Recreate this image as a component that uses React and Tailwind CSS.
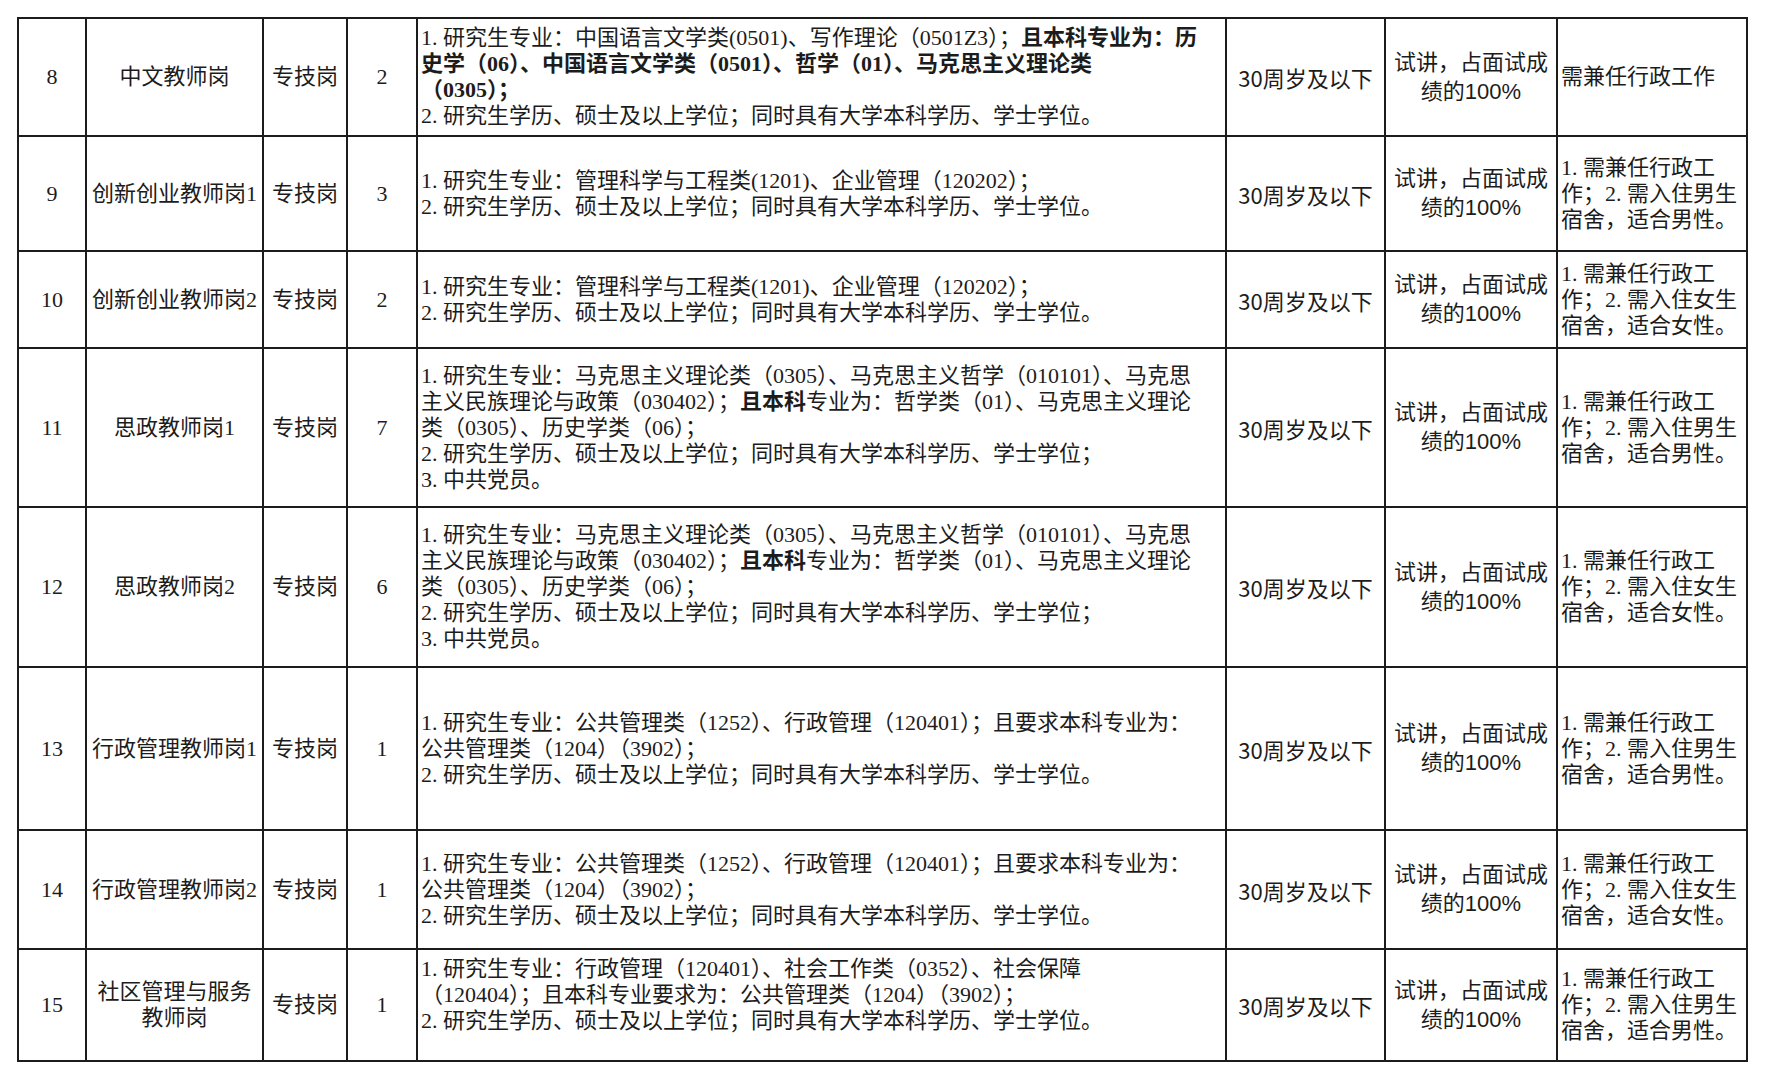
const SERIF = "font-[Liberation_Serif,Noto_Sans_CJK_SC,serif]";

const cols = [68, 177, 84, 70, 809, 159, 172, 190];

const edu2 = "2.研究生学历、硕士及以上学位；同时具有大学本科学历、学士学位。";

const reqA = [
  ["1.研究生专业：管理科学与工程类(1201)、企业管理（120202）；"],
  [edu2],
];

const reqMarx = [
  ["1.研究生专业：马克思主义理论类（0305）、马克思主义哲学（010101）、马克思"],
  ["主义民族理论与政策（030402）；", { b: "且本科" }, "专业为：哲学类（01）、马克思主义理论"],
  ["类（0305）、历史学类（06）；"],
  ["2.研究生学历、硕士及以上学位；同时具有大学本科学历、学士学位；"],
  ["3.中共党员。"],
];

const reqAdmin = [
  ["1.研究生专业：公共管理类（1252）、行政管理（120401）；且要求本科专业为："],
  ["公共管理类（1204）（3902）；"],
  [edu2],
];

const note = (sex) => [
  "1.需兼任行政工",
  `作；2.需入住${sex}生`,
  `宿舍，适合${sex}性。`,
];

const rows = [
  {
    no: "8",
    name: ["中文教师岗"],
    count: "2",
    h: 118,
    req: [
      ["1.研究生专业：中国语言文学类(0501)、写作理论（0501Z3）；", { b: "且本科专业为：历" }],
      [{ b: "史学（06）、中国语言文学类（0501）、哲学（01）、马克思主义理论类" }],
      [{ b: "（0305）；" }],
      [edu2],
    ],
    note: ["需兼任行政工作"],
  },
  { no: "9", name: ["创新创业教师岗1"], count: "3", h: 115, req: reqA, note: note("男") },
  { no: "10", name: ["创新创业教师岗2"], count: "2", h: 97, req: reqA, note: note("女") },
  { no: "11", name: ["思政教师岗1"], count: "7", h: 159, req: reqMarx, note: note("男") },
  { no: "12", name: ["思政教师岗2"], count: "6", h: 160, req: reqMarx, note: note("女") },
  { no: "13", name: ["行政管理教师岗1"], count: "1", h: 163, req: reqAdmin, note: note("男") },
  { no: "14", name: ["行政管理教师岗2"], count: "1", h: 119, req: reqAdmin, note: note("女") },
  {
    no: "15",
    name: ["社区管理与服务", "教师岗"],
    count: "1",
    h: 112,
    top: true,
    req: [
      ["1.研究生专业：行政管理（120401）、社会工作类（0352）、社会保障"],
      ["（120404）；且本科专业要求为：公共管理类（1204）（3902）；"],
      [edu2],
    ],
    note: note("男"),
  },
];

// list markers like "1." take a full half-width slot for the dot, as in the source document
function Marked({ text }) {
  const chunks = text.split(/(\d\.)/);
  return chunks.map((c, i) =>
    /^\d\.$/.test(c) ? (
      <span key={i}>
        {c[0]}
        <span className="inline-block w-[11px]">.</span>
      </span>
    ) : (
      <span key={i}>{c}</span>
    )
  );
}

function Line({ parts }) {
  return (
    <div className="whitespace-nowrap">
      {parts.map((p, i) =>
        typeof p === "string" ? (
          <Marked key={i} text={p} />
        ) : (
          <span key={i} className="font-bold">
            {p.b}
          </span>
        )
      )}
    </div>
  );
}

const cell = "border-2 border-[#1c1c1c] p-0";

export default function App() {
  return (
    <div className={`min-h-screen bg-white pl-[17px] pt-[17px] text-[#1c1c1c] ${SERIF}`}>
      <table className="table-fixed border-collapse text-[22px] leading-[26px]" style={{ width: 1729 }}>
        <colgroup>
          {cols.map((w, i) => (
            <col key={i} style={{ width: w }} />
          ))}
        </colgroup>
        <tbody>
          {rows.map((r) => (
            <tr key={r.no} style={{ height: r.h }}>
              <td className={`${cell} text-center align-middle`}>{r.no}</td>
              <td className={`${cell} text-center align-middle`}>
                {r.name.map((n) => (
                  <div key={n} className="whitespace-nowrap">{n}</div>
                ))}
              </td>
              <td className={`${cell} text-center align-middle`}>专技岗</td>
              <td className={`${cell} text-center align-middle`}>{r.count}</td>
              <td className={`${cell} pl-[3px] ${r.top ? "align-top pt-[6px]" : "align-middle"}`}>
                {r.req.map((parts, i) => (
                  <Line key={i} parts={parts} />
                ))}
              </td>
              <td className={`${cell} text-center align-middle font-[Liberation_Sans_Narrow,Noto_Sans_CJK_SC,sans-serif]`}>
                30周岁及以下
              </td>
              <td className={`${cell} text-center align-middle`}>
                <div className="whitespace-nowrap">试讲，占面试成</div>
                <div className="whitespace-nowrap font-[Noto_Sans_CJK_SC,sans-serif]">
                  绩的<span className="font-[Liberation_Sans_Narrow,sans-serif]">100%</span>
                </div>
              </td>
              <td className={`${cell} pl-[3px] align-middle`}>
                {r.note.map((n) => (
                  <div key={n} className="whitespace-nowrap">
                    <Marked text={n} />
                  </div>
                ))}
              </td>
            </tr>
          ))}
        </tbody>
      </table>
    </div>
  );
}
